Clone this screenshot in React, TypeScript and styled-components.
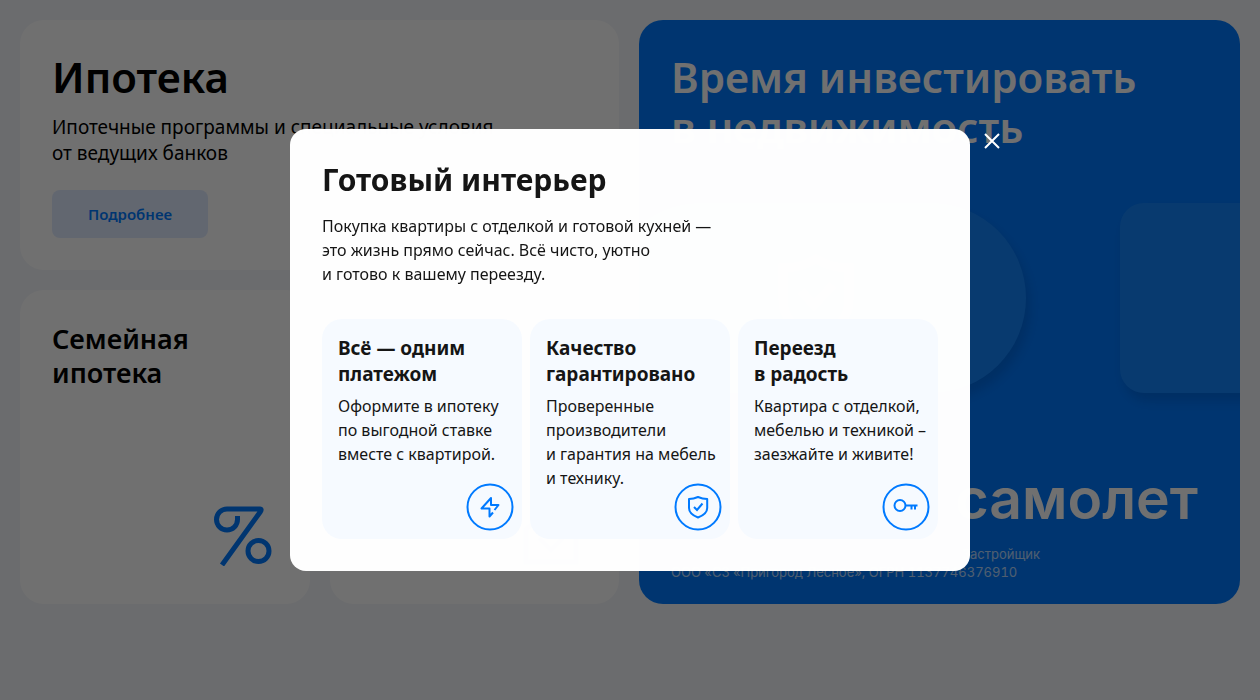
import React from "react";
import styled, { createGlobalStyle } from "styled-components";

const Global = createGlobalStyle`
  * { box-sizing: border-box; }
  html, body, #root { height: 100%; }
  body { margin: 0; background: #f4f6fa; color: #000; font-family: "Noto Sans", "Open Sans", sans-serif; }
  h1, h2, h3, p { margin: 0; }
`;

const Page = styled.main`
  min-height: 100%;
  padding: 20px;
  overflow: hidden;
`;

const Columns = styled.div`
  display: grid;
  grid-template-columns: calc(50% - 11px) minmax(0, 1fr);
  gap: 20px;
`;

const LeftColumn = styled.div`
  display: grid;
  grid-template-columns: 1fr 1fr;
  grid-template-rows: 250px 314px;
  gap: 20px;
`;

const Card = styled.section<{ $wide?: boolean }>`
  display: flex;
  flex-direction: column;
  align-items: flex-start;
  grid-column: ${(p) => (p.$wide ? "1 / -1" : "auto")};
  padding: 32px;
  border-radius: 24px;
  background: #fff;
`;

const Title = styled.h1`
  font-size: 42px;
  line-height: 50px;
  font-weight: 600;
`;

const Lead = styled.p`
  margin-top: 12px;
  font-size: 19px;
  line-height: 26px;
`;

const SoftButton = styled.button`
  width: 156px;
  height: 48px;
  margin-top: 24px;
  border: 0;
  border-radius: 8px;
  background: #e0ebff;
  color: #007aff;
  font: 600 15px/24px "Noto Sans", "Open Sans", sans-serif;
`;

const CardTitle = styled.h2`
  font-size: 27px;
  line-height: 34px;
  font-weight: 600;
`;

const CardIcon = styled.svg`
  width: 60px;
  height: 62px;
  margin: auto 6px 6px auto;
  fill: none;
  stroke: #007aff;
  stroke-width: 5;
`;

const Promo = styled.section`
  display: flex;
  flex-direction: column;
  padding: 32px 0 22px;
  border-radius: 24px;
  background: #007aff;
  color: #fff;
  overflow: hidden;
`;

const PromoTitle = styled(Title)`
  padding: 0 32px;
`;

const Slides = styled.div`
  display: flex;
  gap: 94px;
  margin: 51px 0 0 -33px;
`;

const Slide = styled.div<{ $radius: number }>`
  display: flex;
  flex: 0 0 420px;
  align-items: center;
  justify-content: center;
  height: 190px;
  border-radius: ${(p) => p.$radius}px;
  background: #1485fc;
  box-shadow: 4px 8px 12px rgba(0, 40, 100, 0.2);
`;

const Wordmark = styled.p`
  margin: 70px 42px 0 auto;
  font: 600 57px/72px Inter, sans-serif;
`;

const Legal = styled.p`
  padding: 0 32px;
  margin-top: 10px;
  font: 400 13px/18px Inter, sans-serif;
  font-variant-numeric: tabular-nums;
  opacity: 0.7;
`;

const LegalRole = styled.span`
  display: block;
  margin-left: 291px;
`;

const Overlay = styled.div`
  position: fixed;
  inset: 0;
  display: flex;
  align-items: center;
  justify-content: center;
  background: rgba(0, 0, 0, 0.56);
`;

const Dialog = styled.div`
  position: relative;
  width: 680px;
  max-width: 90%;
  padding: 32px;
  border-radius: 16px;
  background: rgba(255, 255, 255, 0.993);
  color: #151515;
`;

const Close = styled.button`
  position: absolute;
  top: 0;
  left: 100%;
  display: flex;
  align-items: center;
  justify-content: center;
  width: 24px;
  height: 24px;
  margin-left: 10px;
  padding: 0;
  border: 0;
  background: none;
  stroke: #fff;
  stroke-width: 2;
`;

const DialogTitle = styled.h2`
  font-size: 30px;
  line-height: 38px;
  font-weight: 700;
`;

const Text = styled.p`
  font-size: 16px;
  line-height: 24px;
  white-space: nowrap;
`;

const Intro = styled(Text)`
  margin: 15px 0 33px;
`;

const Features = styled.div`
  display: grid;
  grid-template-columns: repeat(3, minmax(0, 1fr));
  gap: 8px;
`;

const Feature = styled.article`
  position: relative;
  min-height: 220px;
  padding: 16px;
  border-radius: 20px;
  background: #f6faff;
`;

const FeatureTitle = styled.h3`
  margin-bottom: 7px;
  font-size: 19px;
  line-height: 26px;
  font-weight: 700;
`;

const FeatureIcon = styled.svg`
  position: absolute;
  right: 8px;
  bottom: 8px;
  width: 48px;
  height: 48px;
  fill: none;
  stroke: #007aff;
  stroke-width: 2;
`;

const features = [
  {
    title: ["Всё — одним", "платежом"],
    text: ["Оформите в ипотеку", "по выгодной ставке", "вместе с квартирой."],
    icon: <path d="M28.500 27 32.500 22H25V15L15.500 25.500H23.500V33.500L27 29.500" strokeLinejoin="round" />,
  },
  {
    title: ["Качество", "гарантировано"],
    text: ["Проверенные", "производители", "и гарантия на мебель", "и технику."],
    icon: (
      <>
        <path d="M24 14Q28.500 16 33.200 16V25Q33.200 31 24 34.500Q15 31 15 25V16Q19.500 16 24 14Z" strokeLinejoin="round" />
        <path d="m20 24 3 3 5.500-6.500" />
      </>
    ),
  },
  {
    title: ["Переезд", "в радость"],
    text: ["Квартира с отделкой,", "мебелью и техникой –", "заезжайте и живите!"],
    icon: (
      <>
        <circle cx="18" cy="22.500" r="5.500" />
        <path d="M23.500 22.500H35.500M29.500 23V26.500M33 23V26.500" />
      </>
    ),
  },
];

const Lines = ({ of }: { of: string[] }) => (
  <>
    {of.map((line, i) => (
      <React.Fragment key={line}>
        {i > 0 && <br />}
        {line}
      </React.Fragment>
    ))}
  </>
);

export default function App() {
  return (
    <>
      <Global />
      <Page>
        <Columns>
          <LeftColumn>
            <Card $wide>
              <Title>Ипотека</Title>
              <Lead>
                <Lines of={["Ипотечные программы и специальные условия", "от ведущих банков"]} />
              </Lead>
              <SoftButton>Подробнее</SoftButton>
            </Card>
            <Card>
              <CardTitle>
                <Lines of={["Семейная", "ипотека"]} />
              </CardTitle>
              <CardIcon viewBox="0 0 60 62" aria-hidden="true">
                <path d="M25.500 12V15.500A10.500 10.500 0 1 1 15 5H48Q50 5 48.500 7.500L10 61" />
                <circle cx="46.500" cy="47" r="10.500" />
              </CardIcon>
            </Card>
            <Card>
              <CardIcon viewBox="0 0 60 62" aria-hidden="true">
                <path d="M5 58V25L30 6L55 25V58ZM18 34L30 46L42 34" />
              </CardIcon>
            </Card>
          </LeftColumn>
          <Promo>
            <PromoTitle as="h2">
              <Lines of={["Время инвестировать", "в недвижимость"]} />
            </PromoTitle>
            <Slides>
              <Slide $radius={95}>
                <svg width="76" height="88" viewBox="0 0 76 88" fill="none" stroke="#fff" strokeWidth="9" aria-hidden="true">
                  <path d="M38 5Q53 14 71 14V46Q71 72 38 83Q5 72 5 46V14Q23 14 38 5ZM23 37L36 51L55 31" />
                </svg>
              </Slide>
              <Slide $radius={24} />
            </Slides>
            <Wordmark>самолет</Wordmark>
            <Legal>
              <LegalRole>Застройщик</LegalRole>
              ООО «СЗ «Пригород Лесное», ОГРН 1137746376910
            </Legal>
          </Promo>
        </Columns>
      </Page>
      <Overlay>
        <Dialog role="dialog" aria-modal="true" aria-labelledby="dialog-title">
          <DialogTitle id="dialog-title">Готовый интерьер</DialogTitle>
          <Intro>
            <Lines
              of={[
                "Покупка квартиры с отделкой и готовой кухней —",
                "это жизнь прямо сейчас. Всё чисто, уютно",
                "и готово к вашему переезду.",
              ]}
            />
          </Intro>
          <Features>
            {features.map((f) => (
              <Feature key={f.title[0]}>
                <FeatureTitle>
                  <Lines of={f.title} />
                </FeatureTitle>
                <Text>
                  <Lines of={f.text} />
                </Text>
                <FeatureIcon viewBox="0 0 48 48" aria-hidden="true">
                  <circle cx="24" cy="24" r="22.500" />
                  {f.icon}
                </FeatureIcon>
              </Feature>
            ))}
          </Features>
          <Close aria-label="Закрыть">
            <svg width="16" height="16" viewBox="0 0 16 16" aria-hidden="true">
              <path d="M1 1 15 15M15 1 1 15" />
            </svg>
          </Close>
        </Dialog>
      </Overlay>
    </>
  );
}
